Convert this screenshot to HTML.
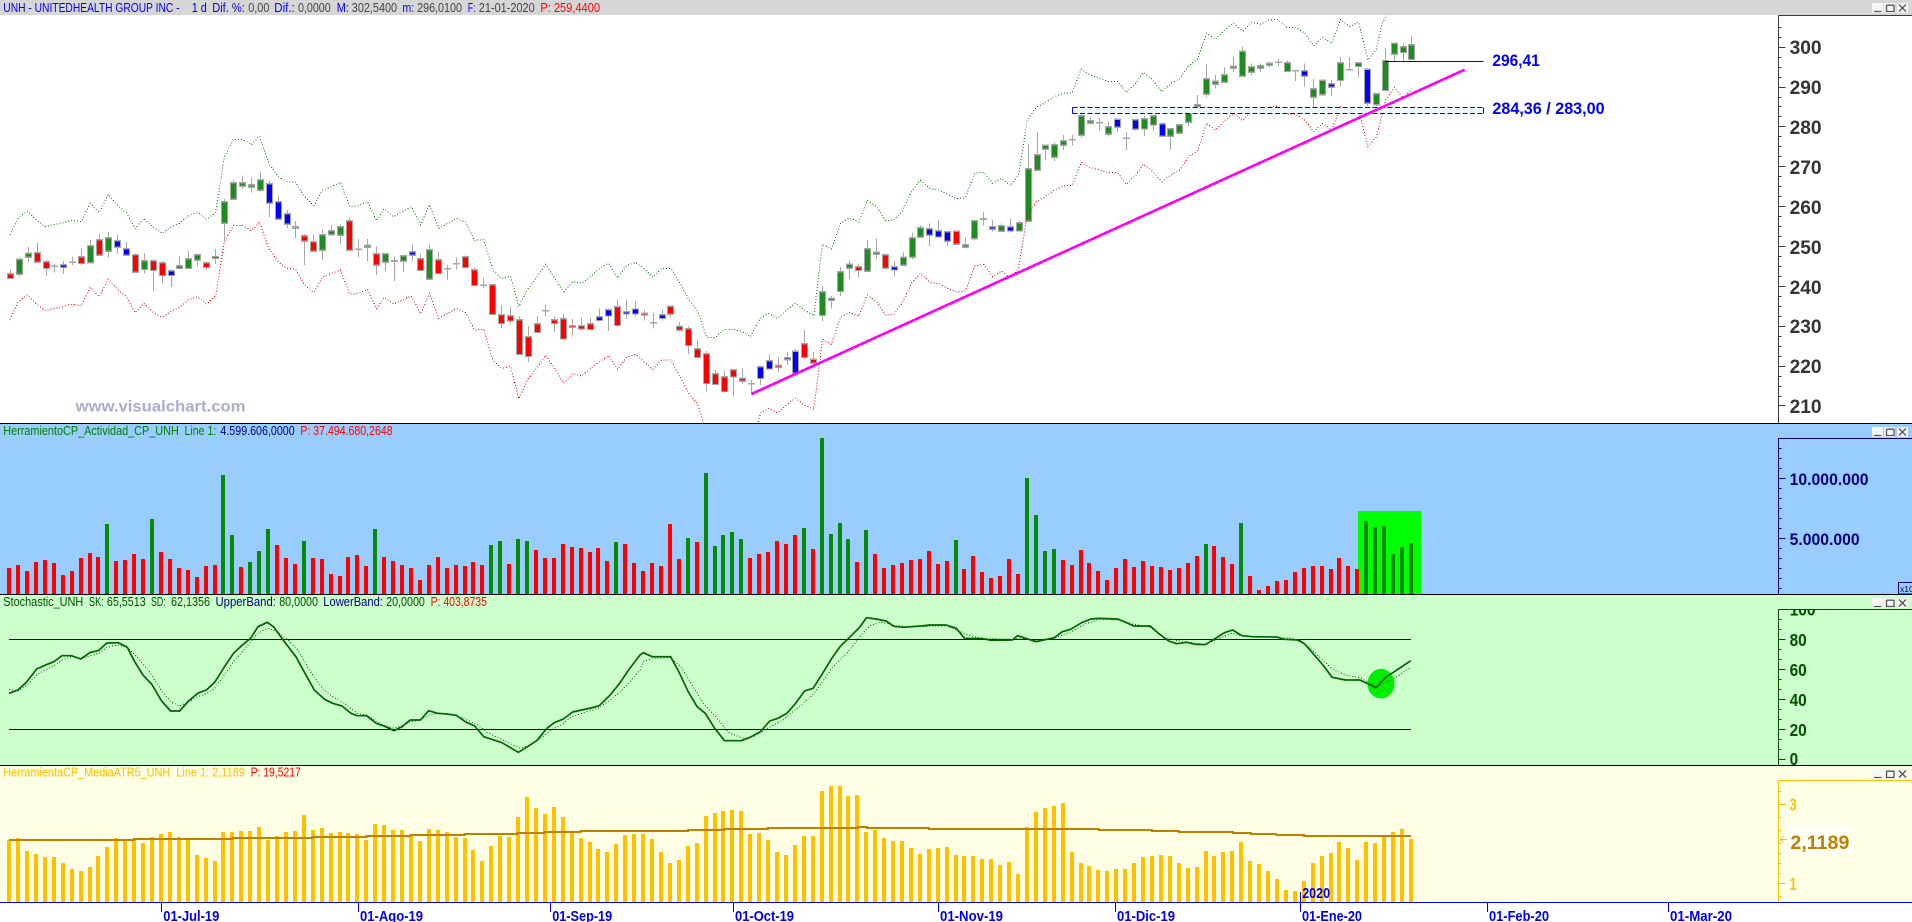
<!DOCTYPE html>
<html lang="es">
<head>
<meta charset="utf-8">
<title>UNH - Visual Chart</title>
<style>
html,body{margin:0;padding:0;background:#fff;overflow:hidden}
svg{display:block}
text{font-family:"Liberation Sans",sans-serif}
.t{font-size:12.6px}
.ax{font-weight:bold;font-size:19px}
.dt{font-weight:bold;font-size:14.5px;fill:#0000ee}
</style>
</head>
<body>
<svg xmlns="http://www.w3.org/2000/svg" width="1912" height="922" viewBox="0 0 1912 922">
<defs>
<clipPath id="cm"><rect x="0" y="15" width="1778" height="408"/></clipPath>
<clipPath id="cs"><rect x="1779" y="610" width="133" height="156"/></clipPath>
</defs>
<rect width="1912" height="922" fill="#fff"/>
<rect width="1912" height="15" fill="#d6d6d6"/>
<rect y="424" width="1912" height="170" fill="#99ccff"/>
<rect y="595" width="1912" height="170" fill="#ccffcc"/>
<rect y="766" width="1912" height="136" fill="#ffffe6"/>
<rect x="1358" y="511" width="63" height="83" fill="#00ff00"/>
<ellipse cx="1381" cy="683.7" rx="13.5" ry="14.8" fill="#00ee00"/>

<g id="vol" shape-rendering="crispEdges"></g>
<g id="atr" shape-rendering="crispEdges"></g>
<g id="stoch"></g>
<g id="cand" clip-path="url(#cm)" shape-rendering="crispEdges"></g>
<g id="bands" clip-path="url(#cm)" shape-rendering="crispEdges"></g>

<g shape-rendering="crispEdges">
<rect x="1072.5" y="107.5" width="411" height="6" fill="#eef8ff"/>
<path d="M1072.5 107.5H1483.5M1072.5 113.5H1483.5" fill="none" stroke="#0000ff" stroke-width="1.2" stroke-dasharray="5 2.5"/>
<path d="M1072.5 107.5V113.5M1483.5 107.5V113.5" fill="none" stroke="#0000ff" stroke-width="1"/>
<path d="M1384.7 61.5H1483.4" stroke="#0000cc" stroke-width="1.3" fill="none"/>
</g>
<path d="M751.4 394L1464.7 69.7" stroke="#ff00ff" stroke-width="2.6" fill="none" shape-rendering="crispEdges"/>

<g id="axes" shape-rendering="crispEdges"></g>
<g id="wb" shape-rendering="geometricPrecision"></g>

<path d="M0 423.5H1912M0 594.5H1912M0 765.5H1912" stroke="#000" stroke-width="1" fill="none" shape-rendering="crispEdges"/>
<path d="M0 902.5H1912" stroke="#0000ee" stroke-width="1.4" fill="none" shape-rendering="crispEdges"/>
<path d="M161.5 902V912M358.5 902V912M550.5 902V912M733.5 902V912M938.5 902V912M1115.5 902V912M1300.5 892V912M1487.5 902V912M1668.5 902V912" stroke="#0000ee" stroke-width="1" fill="none" shape-rendering="crispEdges"/>

<!-- title main -->
<g class="t">
<g fill="#0000ff">
<text x="3.3" y="12" textLength="176.3" lengthAdjust="spacingAndGlyphs">UNH - UNITEDHEALTH GROUP INC -</text>
<text x="191.8" y="12" textLength="15" lengthAdjust="spacingAndGlyphs">1 d</text>
<text x="212.2" y="12" textLength="32.7" lengthAdjust="spacingAndGlyphs">Dif. %:</text>
<text x="274.3" y="12" textLength="20.4" lengthAdjust="spacingAndGlyphs">Dif.:</text>
<text x="336.7" y="12" textLength="12.2" lengthAdjust="spacingAndGlyphs">M:</text>
<text x="402.4" y="12" textLength="11.8" lengthAdjust="spacingAndGlyphs">m:</text>
<text x="467.8" y="12" textLength="7.8" lengthAdjust="spacingAndGlyphs">F:</text>
</g>
<g fill="#444">
<text x="248.2" y="12" textLength="21.2" lengthAdjust="spacingAndGlyphs">0,00</text>
<text x="298" y="12" textLength="32.7" lengthAdjust="spacingAndGlyphs">0,0000</text>
<text x="351.8" y="12" textLength="45.3" lengthAdjust="spacingAndGlyphs">302,5400</text>
<text x="417.1" y="12" textLength="44.9" lengthAdjust="spacingAndGlyphs">296,0100</text>
<text x="478.8" y="12" textLength="55.9" lengthAdjust="spacingAndGlyphs">21-01-2020</text>
</g>
<text x="540.4" y="12" fill="#ff0000" textLength="59.6" lengthAdjust="spacingAndGlyphs">P: 259,4400</text>

<g fill="#008000">
<text x="3.3" y="435" textLength="175.5" lengthAdjust="spacingAndGlyphs">HerramientoCP_Actividad_CP_UNH</text>
<text x="184.5" y="435" textLength="31.8" lengthAdjust="spacingAndGlyphs">Line 1:</text>
</g>
<text x="220.4" y="435" fill="#000080" textLength="74.3" lengthAdjust="spacingAndGlyphs">4.599.606,0000</text>
<text x="300.4" y="435" fill="#ff0000" textLength="92.2" lengthAdjust="spacingAndGlyphs">P: 37.494.680,2648</text>

<g fill="#005000">
<text x="3.3" y="606" textLength="80" lengthAdjust="spacingAndGlyphs">Stochastic_UNH</text>
<text x="89" y="606" textLength="14.7" lengthAdjust="spacingAndGlyphs">SK:</text>
<text x="106.9" y="606" textLength="38.8" lengthAdjust="spacingAndGlyphs">65,5513</text>
<text x="151" y="606" textLength="14.7" lengthAdjust="spacingAndGlyphs">SD:</text>
<text x="171" y="606" textLength="39" lengthAdjust="spacingAndGlyphs">62,1356</text>
<text x="279.2" y="606" textLength="38.8" lengthAdjust="spacingAndGlyphs">80,0000</text>
<text x="386.1" y="606" textLength="38.8" lengthAdjust="spacingAndGlyphs">20,0000</text>
</g>
<g fill="#000080">
<text x="215.5" y="606" textLength="60.4" lengthAdjust="spacingAndGlyphs">UpperBand:</text>
<text x="323.3" y="606" textLength="59.6" lengthAdjust="spacingAndGlyphs">LowerBand:</text>
</g>
<text x="430.6" y="606" fill="#ff0000" textLength="56.3" lengthAdjust="spacingAndGlyphs">P: 403,8735</text>

<g fill="#ffc000">
<text x="3.3" y="776.5" textLength="166.9" lengthAdjust="spacingAndGlyphs">HerramientaCP_MediaATR5_UNH</text>
<text x="176.3" y="776.5" textLength="68.6" lengthAdjust="spacingAndGlyphs">Line 1: 2,1189</text>
</g>
<text x="250.6" y="776.5" fill="#ff0000" textLength="50.2" lengthAdjust="spacingAndGlyphs">P: 19,5217</text>
</g>

<!-- watermark -->
<text x="75.5" y="411.5" font-size="16" font-weight="bold" fill="#a9adcf" textLength="170" lengthAdjust="spacingAndGlyphs">www.visualchart.com</text>

<!-- annotations -->
<g font-weight="bold" font-size="17" fill="#0000ff">
<text x="1492.4" y="66" textLength="47.4" lengthAdjust="spacingAndGlyphs">296,41</text>
<text x="1492.4" y="114" textLength="112.2" lengthAdjust="spacingAndGlyphs">284,36 / 283,00</text>
</g>

<!-- main axis labels -->
<g class="ax" fill="#333">
<text x="1789.6" y="54" textLength="32" lengthAdjust="spacingAndGlyphs">300</text>
<text x="1789.6" y="94" textLength="32" lengthAdjust="spacingAndGlyphs">290</text>
<text x="1789.6" y="134" textLength="32" lengthAdjust="spacingAndGlyphs">280</text>
<text x="1789.6" y="174" textLength="32" lengthAdjust="spacingAndGlyphs">270</text>
<text x="1789.6" y="214" textLength="32" lengthAdjust="spacingAndGlyphs">260</text>
<text x="1789.6" y="254" textLength="32" lengthAdjust="spacingAndGlyphs">250</text>
<text x="1789.6" y="294" textLength="32" lengthAdjust="spacingAndGlyphs">240</text>
<text x="1789.6" y="333" textLength="32" lengthAdjust="spacingAndGlyphs">230</text>
<text x="1789.6" y="373" textLength="32" lengthAdjust="spacingAndGlyphs">220</text>
<text x="1789.6" y="413" textLength="32" lengthAdjust="spacingAndGlyphs">210</text>
</g>
<g font-weight="bold" font-size="16.5" fill="#000080">
<text x="1789.6" y="485" textLength="79" lengthAdjust="spacingAndGlyphs">10.000.000</text>
<text x="1789.6" y="545" textLength="70" lengthAdjust="spacingAndGlyphs">5.000.000</text>
</g>
<rect x="1898.5" y="582.5" width="14" height="11.5" fill="#99ccff" stroke="#000080" stroke-width="1" shape-rendering="crispEdges"/>
<text x="1900" y="592" font-size="8.5" fill="#000080">x10</text>

<g font-weight="bold" font-size="17.5" fill="#005000">
<text x="1789.6" y="615.5" textLength="26" lengthAdjust="spacingAndGlyphs" clip-path="url(#cs)">100</text>
<text x="1789.6" y="646" textLength="17.1" lengthAdjust="spacingAndGlyphs">80</text>
<text x="1789.6" y="676" textLength="17.1" lengthAdjust="spacingAndGlyphs">60</text>
<text x="1789.6" y="706" textLength="17.1" lengthAdjust="spacingAndGlyphs">40</text>
<text x="1789.6" y="736" textLength="17.1" lengthAdjust="spacingAndGlyphs">20</text>
<text x="1789.6" y="765" textLength="8.5" lengthAdjust="spacingAndGlyphs" clip-path="url(#cs)">0</text>
</g>

<g font-weight="bold" font-size="17.5" fill="#ffc000">
<text x="1789.6" y="810.7" textLength="7" lengthAdjust="spacingAndGlyphs">3</text>
<text x="1789.6" y="890" textLength="7" lengthAdjust="spacingAndGlyphs">1</text>
</g>
<rect x="1788" y="825.3" width="65" height="28" fill="#fffff6"/>
<text x="1790.4" y="849" font-weight="bold" font-size="19" fill="#bf8000" textLength="59" lengthAdjust="spacingAndGlyphs">2,1189</text>
<path d="M1787 839.5H1780.5M1783.5 836.5L1780.5 839.5L1783.5 842.5" stroke="#ffc000" stroke-width="1" fill="none"/>

<!-- date labels -->
<g class="dt">
<text x="163.3" y="921" textLength="56" lengthAdjust="spacingAndGlyphs">01-Jul-19</text>
<text x="360" y="921" textLength="63" lengthAdjust="spacingAndGlyphs">01-Ago-19</text>
<text x="552.2" y="921" textLength="60" lengthAdjust="spacingAndGlyphs">01-Sep-19</text>
<text x="735" y="921" textLength="59" lengthAdjust="spacingAndGlyphs">01-Oct-19</text>
<text x="940" y="921" textLength="63" lengthAdjust="spacingAndGlyphs">01-Nov-19</text>
<text x="1117" y="921" textLength="58" lengthAdjust="spacingAndGlyphs">01-Dic-19</text>
<text x="1302" y="921" textLength="60" lengthAdjust="spacingAndGlyphs">01-Ene-20</text>
<text x="1489" y="921" textLength="60" lengthAdjust="spacingAndGlyphs">01-Feb-20</text>
<text x="1670" y="921" textLength="62" lengthAdjust="spacingAndGlyphs">01-Mar-20</text>
<text x="1302.2" y="898" textLength="28" lengthAdjust="spacingAndGlyphs">2020</text>
</g>

<script>
(function(){
var NS="http://www.w3.org/2000/svg";
function el(p,n,a){var e=document.createElementNS(NS,n);for(var k in a)e.setAttribute(k,a[k]);document.getElementById(p).appendChild(e);return e;}
var OFF=[0,640,1272];
function pl(sections,oy){var out=[];sections.forEach(function(s,i){var a=s.trim().split(/\s+/);a.forEach(function(p){var q=p.split(",");out.push(((+q[0])/2.45+OFF[i]).toFixed(1)+" "+(oy+(+q[1])/3).toFixed(1));});});return "M"+out.join("L");}

/* volume */
var V="444r 435r 453r 426r 420r 429r 465r 453r 414r 399r 411r 312g 423r 420r 402r 417r 297g 396r 417r 444r 450r 471r 438r 435r 165g 345g 441r 426g 393g 327g 375r 414r 432r 363g 414r 417r 462r 468r 411r 405r 438r 327g 411r 423r 435r 444r 480r 435r 411r 444r 435r 438r 426r 435r 375g 363g 432r 357g 363g 390r 414r 414r 372r 381r 384r 396r 384r 423r 366g 372r 429r 453r 429r 438r 312r 417r 354g 366r 159g 378g 345g 336g 357g 414r 402r 396r 363r 372r 345r 324g 387r 54g 342g 309g 357g 426r 330g 402r 444r 435r 429r 420r 417r 393r 432r 423r 360g 447r 408r 456r 474r 468r 417r 462r 174g 285g 393g 387g 420r 435r 390r 429r 453r 480r 444r 417r 441r 423r 438r 441r 450r 444r 429r 408r 372g 378r 411r 432r 309g 468r 510r 498r 483r 480r 456r 444r 438r 438r 447r 414r 438r 447r 303g 321g 318g 402g 381g 369g".split(" ");
var gv="",rv="";
V.forEach(function(s,i){var c=s.slice(-1),z=parseFloat(s),y=Math.round(420+z/3),x=Math.round(9.2+8.928*i)-2;var d="M"+x+" "+y+"h4V594h-4z";if(c=="g")gv+=d;else rv+=d;});
el("vol","path",{d:gv,fill:"#078a07"});
el("vol","path",{d:rv,fill:"#ff0000"});

/* ATR */
var A=[270,264,303,312,321,321,339,357,363,351,318,291,264,270,270,279,261,252,246,261,267,315,324,333,246,246,243,243,231,270,258,246,243,195,240,234,249,246,249,252,270,222,225,240,240,255,273,237,240,246,261,264,300,333,288,258,261,201,141,174,192,171,201,249,264,276,297,306,282,255,252,252,267,306,339,330,288,279,198,189,183,180,183,252,249,270,306,315,285,258,258,123,108,108,138,135,246,240,264,273,273,294,312,297,294,291,315,318,318,327,327,345,336,372,231,186,174,168,159,306,339,348,360,363,357,357,339,321,318,315,318,339,354,351,303,318,306,303,276,333,342,363,387,420,423,393,339,318,309,276,294,330,276,279,258,246,237,267];
var ad="";A.forEach(function(z,i){var y=Math.round(750+z/3),x=Math.round(9.2+8.928*i)-2;ad+="M"+x+" "+y+"h4V902h-4z";});
el("atr","path",{d:ad,fill:"#ffc000"});
var AL=["22,270 328,270 328,267 570,267 570,264 766,264 766,261 898,261 898,258 1006,258 1006,255 1138,255 1138,252 1268,252 1268,249 1334,249 1334,246 1422,246 1422,243 1568,243",
"0,243 118,243 118,240 206,240 206,237 314,237 314,234 534,234 534,231 556,231 556,234 708,234 708,237 1125,237 1125,240 1254,240 1254,243 1321,243 1321,246 1453,246 1453,249 1497,249 1497,252 1561,252",
"12,252 12,255 78,255 78,258 340,258"];
el("atr","path",{d:pl(AL,750),fill:"none",stroke:"#bf8000","stroke-width":2});

/* stochastic */
el("stoch","path",{d:"M9 639.5H1411M9 729.5H1411",stroke:"#000080","stroke-width":1,fill:"none","shape-rendering":"crispEdges"});
var SD=["22,808 44,813 66,795 90,765 110,750 132,738 152,720 175,710 198,715 220,708 242,700 262,682 290,675 312,682 335,710 370,762 395,810 418,845 440,858 462,845 484,830 506,820 526,805 550,765 572,725 594,695 614,665 632,640 655,625 680,635 705,660 730,690 755,745 790,805 815,830 850,855 875,880 900,885 922,905 945,918 965,925 985,918 1005,905 1030,900 1050,885 1072,880 1095,882 1118,886 1145,900 1170,915 1190,935 1215,950 1240,965 1275,985 1300,975 1325,955 1350,930 1375,915 1400,890 1430,878 1465,865 1495,840 1525,810 1568,750",
"8,725 30,715 75,713 100,740 130,800 155,850 185,890 220,940 255,955 280,948 305,930 350,900 395,855 430,815 470,745 510,695 535,655 560,620 585,607 605,610 625,617 665,620 750,617 785,635 810,648 840,655 912,658 930,655 970,660 1015,655 1060,633 1090,612 1125,598 1170,600 1210,613 1250,622 1280,650 1310,660 1360,670 1385,672 1420,655 1450,640 1475,648 1560,651",
"12,653 50,655 85,675 120,715 145,745 180,765 215,773 255,798 275,790 300,775 338,743"];
el("stoch","path",{d:pl(SD,420),fill:"none",stroke:"#006400","stroke-width":1,"stroke-dasharray":"1 2","shape-rendering":"crispEdges"});
var SK=["22,820 44,810 66,785 90,747 110,736 132,725 152,707 175,707 198,717 220,698 242,691 262,669 290,668 312,682 330,725 350,765 372,793 396,843 418,873 440,873 462,843 484,820 506,810 526,787 550,740 572,700 594,675 614,655 632,620 655,607 670,620 695,662 725,710 745,755 770,810 795,838 815,850 838,858 860,880 875,887 898,887 922,910 945,920 965,932 985,920 1005,900 1030,900 1050,872 1072,880 1095,882 1118,886 1140,905 1163,918 1185,950 1205,958 1230,968 1270,997 1290,982 1315,962 1340,925 1358,908 1380,897 1403,876 1425,870 1448,864 1468,857 1495,825 1518,790 1540,750 1568,705",
"8,698 30,710 75,710 95,755 118,815 140,860 160,880 183,925 207,962 248,962 270,952 295,935 318,903 338,895 360,880 380,852 403,813 424,805 445,765 470,715 490,680 515,650 538,622 555,593 578,597 603,603 622,619 645,622 665,620 690,618 710,615 750,615 775,625 795,655 840,656 860,661 912,660 925,647 945,655 970,665 1015,653 1035,635 1055,628 1082,608 1105,597 1125,595 1170,597 1190,607 1210,618 1250,618 1270,640 1295,663 1315,671 1340,667 1360,673 1385,674 1410,655 1432,638 1452,630 1475,647 1500,650 1560,651",
"12,651 30,658 65,660 80,672 100,700 125,735 147,772 180,780 215,780 255,803 280,770 300,755 340,722"];
el("stoch","path",{d:pl(SK,420),fill:"none",stroke:"#006400","stroke-width":1.7,"stroke-linejoin":"round"});

/* candles: high top bottom low colour */
var C="810 821 835 835 r|772 778 823 830 g|741 760 772 786 g|729 758 787 787 r|780 785 805 828 r|790 799 799 818 d|783 794 802 822 b|771 787 787 795 d|745 770 790 795 r|720 737 788 791 g|702 719 766 766 r|696 713 754 773 g|705 722 742 762 b|726 746 766 766 b|760 764 817 817 r|759 782 808 820 g|778 782 811 873 r|783 788 826 849 r|808 812 826 861 b|768 797 805 805 g|753 776 805 805 g|760 764 781 798 g|785 788 802 812 r|747 770 775 792 b|597 605 670 720 g|540 548 598 600 g|526 548 559 566 g|532 554 562 578 g|514 539 571 574 g|541 551 610 651 b|586 605 658 658 b|630 641 673 684 b|663 680 685 714 g|702 707 724 795 r|705 725 754 754 r|690 704 751 780 g|675 692 704 708 g|674 680 706 732 g|652 662 751 754 r|717 748 748 771 d|717 736 742 783 g|739 761 796 825 r|760 761 787 813 g|770 783 783 843 d|765 767 784 816 g|733 755 766 783 b|762 776 811 812 r|733 749 838 838 g|756 779 820 821 r|795 806 806 840 d|772 791 791 808 d|767 770 802 805 r|802 809 856 856 r|834 856 856 864 d|853 854 943 943 r|917 944 970 984 r|920 947 963 972 r|950 959 1063 1065 r|978 1010 1069 1086 r|948 971 997 998 r|915 932 932 948 d|950 959 970 996 r|942 956 1017 1018 r|957 977 982 1005 r|954 977 987 992 r|954 971 988 990 r|925 950 961 965 b|925 929 948 993 b|898 920 976 980 r|898 935 942 957 b|903 927 942 950 b|930 940 945 962 r|939 968 968 986 d|930 944 955 962 b|919 919 943 952 r|966 979 991 995 r|979 986 1036 1062 r|1018 1046 1072 1072 r|1053 1061 1150 1175 r|1110 1121 1153 1153 r|1113 1130 1174 1178 r|1108 1109 1131 1190 r|1104 1135 1144 1152 r|1140 1151 1151 1182 d|1097 1100 1135 1155 b|1065 1082 1107 1108 b|1072 1096 1102 1116 r|1056 1073 1079 1095 b|1047 1054 1120 1122 b|990 1031 1072 1077 r|1056 1078 1090 1090 r|858 875 946 963 g|888 895 901 926 b|801 815 874 888 g|781 793 805 837 g|790 800 811 831 r|720 746 814 815 g|716 757 763 777 r|760 764 805 808 r|784 800 810 830 b|757 772 796 797 g|699 713 772 778 g|675 683 712 712 g|670 686 706 738 b|660 692 711 711 b|693 695 724 738 b|692 694 733 733 r|714 734 742 746 g|658 662 716 722 g|636 657 657 677 d|660 680 688 695 b|670 677 694 694 g|655 680 693 698 b|663 668 693 693 g|432 506 664 664 g|396 464 511 511 g|433 436 448 480 g|427 434 472 483 g|405 422 436 450 g|405 419 419 437 d|343 347 406 413 g|351 362 370 374 g|354 368 368 393 d|366 380 403 410 g|356 358 382 396 b|396 415 415 450 d|358 359 388 392 b|346 356 387 408 g|346 347 375 390 g|367 371 409 410 b|385 386 409 450 g|371 374 400 402 g|331 338 367 378 g|285 314 320 328 g|192 236 283 293 g|225 244 253 266 g|202 224 247 247 g|171 199 205 216 g|139 154 229 229 g|190 200 217 225 g|190 197 205 216 g|184 190 196 203 g|177 187 187 200 d|181 188 214 215 g|212 212 212 243 d|190 212 229 260 b|237 266 292 325 g|238 241 284 288 g|240 251 262 288 b|171 188 241 258 g|171 209 209 212 d|186 188 199 231 g|204 208 310 318 b|280 281 314 318 g|144 182 271 272 g|127 130 163 185 g|130 140 157 188 g|108 134 178 182 g".split("|");
var w="",dj="",F={r:"#ff0000",g:"#1f8c1f",b:"#0000ff"},bodies=[];
C.forEach(function(s,i){var a=s.split(" "),h=+a[0]/3,t=+a[1]/3,b=+a[2]/3,l=+a[3]/3,c=a[4];
var x=Math.round(9.8+8.928*i)+.5;
w+="M"+x+" "+h.toFixed(1)+"V"+l.toFixed(1);
if(c=="d"){dj+="M"+(x-3.5)+" "+t.toFixed(1)+"H"+(x+3.5);}
else bodies.push([x,t,b,c]);
});
el("cand","path",{d:w,stroke:"#a6a6a6","stroke-width":1,fill:"none"});
el("cand","path",{d:dj,stroke:"#a6a6a6","stroke-width":1.6,fill:"none"});
bodies.forEach(function(o){el("cand","rect",{x:o[0]-3,y:o[1].toFixed(1),width:6,height:Math.max(1,o[2]-o[1]).toFixed(1),fill:F[o[3]],stroke:"#a6a6a6","stroke-width":1.3});});

/* bands */
var U=["24,705 45,653 67,633 89,660 111,680 133,673 155,668 177,660 199,665 221,610 243,638 265,583 289,617 311,640 331,686 352,655 374,680 397,700 418,682 440,670 461,648 484,636 506,658 528,638 550,470 572,418 594,418 616,434 636,408 658,488 681,530 703,545 724,547 746,590 769,617 790,571 812,560 834,547 857,620 878,617 900,604 923,662 941,626 964,650 986,635 1008,620 1031,675 1052,614 1075,685 1097,670 1118,655 1141,667 1163,722 1185,718 1207,810 1229,835 1251,829 1271,920 1292,870 1315,832 1337,793 1359,835 1381,875 1403,845 1425,850 1447,830 1469,805 1491,790 1513,833 1535,797 1557,787",
"9,805 31,832 53,805 76,805 98,850 120,900 142,935 163,1012 185,1012 207,988 230,988 251,995 270,1010 295,955 315,940 337,955 359,930 381,910 403,930 426,947 447,733 469,747 491,670 513,653 536,666 557,601 580,620 602,662 622,659 643,633 665,575 687,541 710,565 732,570 754,583 776,596 797,593 820,520 842,517 864,550 886,535 908,557 927,525 949,360 971,322 993,308 1015,290 1037,280 1059,278 1081,208 1103,225 1127,235 1147,244 1171,244 1191,277 1215,250 1233,217 1256,240 1279,275 1300,250 1322,237 1344,197 1366,178 1388,100 1410,118 1432,90 1454,70 1477,93 1498,67 1521,73 1540,60",
"14,58 36,82 58,82 80,100 102,137 124,112 146,130 168,58 190,80 212,66 235,180 256,147 270,70 282,42"];
var L=["24,958 45,905 67,885 89,912 111,932 133,925 155,920 177,912 199,917 221,862 243,890 265,838 289,869 311,892 331,938 352,910 374,935 397,952 418,935 440,922 461,900 484,890 506,913 528,888 550,725 572,676 594,676 616,692 636,666 658,745 681,785 703,805 724,808 746,855 769,877 790,832 812,820 834,810 857,883 878,880 900,868 923,926 941,892 964,912 986,900 1008,888 1031,942 1052,880 1075,955 1097,940 1118,925 1141,938 1163,990 1185,988 1207,1080 1229,1105 1251,1099 1271,1196 1292,1140 1315,1105 1337,1066 1359,1105 1381,1150 1403,1120 1425,1128 1447,1105 1469,1085 1491,1067 1513,1108 1535,1072 1557,1063",
"9,1085 31,1108 53,1080 76,1080 98,1130 120,1180 142,1215 163,1300 185,1360 207,1330 230,1330 251,1340 270,1360 295,1240 315,1225 337,1238 359,1215 381,1195 403,1215 426,1228 447,1018 469,1033 491,953 513,937 536,948 557,885 580,905 602,946 622,942 643,908 665,850 687,820 710,847 732,851 754,865 776,876 797,873 820,799 842,793 864,830 886,813 908,835 927,805 949,645 971,605 993,590 1015,570 1037,558 1059,556 1081,487 1103,503 1127,510 1147,518 1171,518 1191,553 1215,525 1233,492 1256,515 1279,545 1300,525 1322,510 1344,470 1366,452 1388,370 1410,390 1432,362 1454,340 1477,362 1498,332 1521,338 1540,322",
"14,318 36,343 58,342 80,360 102,395 124,370 146,390 168,320 190,338 212,327 235,440 256,410 278,300 300,262 322,295 342,267"];
el("bands","path",{d:pl(U,0),fill:"none",stroke:"#008000","stroke-width":1,"stroke-dasharray":"1 2"});
el("bands","path",{d:pl(L,0),fill:"none",stroke:"#ff0000","stroke-width":1,"stroke-dasharray":"1 2"});

/* axes */
function axis(x0,top,bot,col,list,oy,maj){
 var d="M"+x0+" "+top+"V"+bot+"M"+x0+" "+top+"H1912";
 el("axes","path",{d:d,stroke:col,"stroke-width":1,fill:"none"});
 var t="";
 list.forEach(function(z){var y=Math.round(oy+z/3)+.5;t+="M"+x0+" "+y+"h"+(maj(z)?7:3);});
 el("axes","path",{d:t,stroke:col,"stroke-width":1,fill:"none"});
}
var m=[];for(var k=-2;k<=36;k++)m.push(140+k*29.9);
axis(1778.5,15.5,423,"#3a3a3a",m,0,function(z){var r=Math.round((z-140)/29.9);return r%4==0;});
var v=[];for(k=85;k<=505;k+=30)v.push(k);
axis(1778.5,438.5,594,"#000080",v,420,function(z){return z==175||z==355;});
var s=[];for(k=598;k<=1018;k+=30)s.push(k);
axis(1778.5,609.5,765,"#005000",s,420,function(z){return (z-658)%90==0;});
axis(1778.5,780.5,902,"#ffc000",[122,162,202,240,280,310,340,370,400,438],750,function(z){return z==162||z==400;});

/* window buttons */
[3.3,426.7,597.7,769].forEach(function(y){
 y=Math.round(y);
 [1872,1884,1897].forEach(function(x){el("wb","rect",{x:x,y:y,width:11,height:10,fill:"#f6f6f6"});});
 var d="M1874 "+(y+8.5)+"H1881.5M1886.5 "+(y+2.2)+"H1894M1886.5 "+(y+2)+"V"+(y+8.5)+"H1894V"+(y+2)+"M1899 "+(y+1.5)+"L1906 "+(y+8.5)+"M1906 "+(y+1.5)+"L1899 "+(y+8.5);
 el("wb","path",{d:d,stroke:"#555",fill:"none","stroke-width":1.3});
});
})();
</script>
</svg>
</body>
</html>
